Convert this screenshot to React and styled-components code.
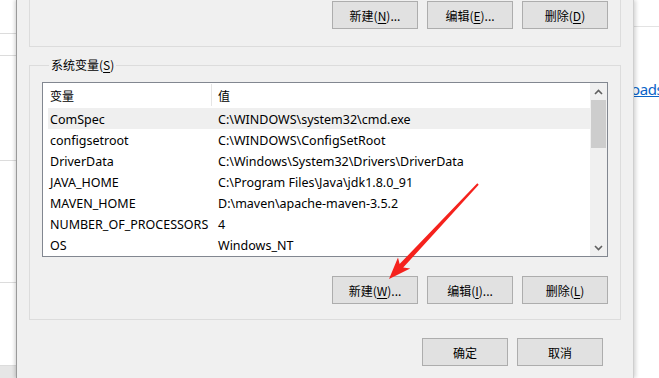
import styled, { createGlobalStyle } from "styled-components";

const GlobalStyle = createGlobalStyle`
  html, body {
    margin: 0;
    padding: 0;
    background: #ffffff;
    overflow: hidden;
  }
  body {
    font-family: "Noto Sans", "Noto Sans CJK SC", sans-serif;
    font-size: 12px;
    color: #000;
  }
`

const rows = [
    {name: 'ComSpec', value: 'C:\\WINDOWS\\system32\\cmd.exe', active: true},
    {name: 'configsetroot', value: 'C:\\WINDOWS\\ConfigSetRoot'},
    {name: 'DriverData', value: 'C:\\Windows\\System32\\Drivers\\DriverData'},
    {name: 'JAVA_HOME', value: 'C:\\Program Files\\Java\\jdk1.8.0_91'},
    {name: 'MAVEN_HOME', value: 'D:\\maven\\apache-maven-3.5.2'},
    {name: 'NUMBER_OF_PROCESSORS', value: '4'},
    {name: 'OS', value: 'Windows_NT'},
]

const sideLines = [33, 21, 104, 121, 82]

function App() {
    return (
        <>
            <GlobalStyle/>
            <Page>
                <LeftStrip>
                    {sideLines.map((h, i) => <SideRow key={i} $h={h}/>)}
                    <SideFooter/>
                </LeftStrip>

                <Dialog>
                    <TopGroup>
                        <ButtonRow $right={12}>
                            <Button>新建(<u>N</u>)...</Button>
                            <Button>编辑(<u>E</u>)...</Button>
                            <Button>删除(<u>D</u>)</Button>
                        </ButtonRow>
                    </TopGroup>

                    <SysGroup>
                        <Legend>系统变量(<u>S</u>)</Legend>
                        <ListBox>
                            <ListContent>
                                <HeaderRow>
                                    <NameCell>变量</NameCell>
                                    <Divider/>
                                    <ValueCell>值</ValueCell>
                                </HeaderRow>
                                {rows.map((r, i) => (
                                    <Row key={i} $active={r.active}>
                                        <NameCell>{r.name}</NameCell>
                                        <ValueCell $pad>{r.value}</ValueCell>
                                    </Row>
                                ))}
                            </ListContent>
                            <Scrollbar>
                                <ScrollArrow>
                                    <svg width="9" height="6" viewBox="0 0 9 6">
                                        <polyline points="1,5 4.5,1.5 8,5" fill="none" stroke="#606060" strokeWidth="1.6"/>
                                    </svg>
                                </ScrollArrow>
                                <Track>
                                    <Thumb/>
                                </Track>
                                <ScrollArrow>
                                    <svg width="9" height="6" viewBox="0 0 9 6">
                                        <polyline points="1,1 4.5,4.5 8,1" fill="none" stroke="#606060" strokeWidth="1.6"/>
                                    </svg>
                                </ScrollArrow>
                            </Scrollbar>
                        </ListBox>
                        <ButtonRow $top={18} $right={0}>
                            <Button>新建(<u>W</u>)...</Button>
                            <Button>编辑(<u>I</u>)...</Button>
                            <Button>删除(<u>L</u>)</Button>
                        </ButtonRow>
                    </SysGroup>

                    <FooterRow>
                        <Button>确定</Button>
                        <Button>取消</Button>
                    </FooterRow>
                </Dialog>

                <RightStrip>
                    <RightLine/>
                    <Link>oads</Link>
                </RightStrip>

                <Arrow width="659" height="378" viewBox="0 0 659 378">
                    <polygon
                        points="389,279 398,257.6 399.6,264 477.3,183.3 478.7,184.7 403.2,267.6 410.2,268.5"
                        fill="#f5221d"/>
                </Arrow>
            </Page>
        </>
    )
}

export default App;


const Page = styled.div`
  position: relative;
  display: flex;
  width: 659px;
  height: 378px;
  overflow: hidden;
`

const LeftStrip = styled.div`
  width: 16px;
  flex-shrink: 0;
  display: flex;
  flex-direction: column;
  background: #fff;
`

const SideRow = styled.div`
  height: ${p => p.$h}px;
  flex-shrink: 0;
  border-bottom: 1px solid #dcdcdc;
`

const SideFooter = styled.div`
  flex: 1;
  background: #e6e6e6;
`

const Dialog = styled.div`
  position: relative;
  z-index: 1;
  width: 592px;
  flex-shrink: 0;
  padding: 0 12px;
  background: #f0f0f0;
  border-left: 1px solid #9a9a9a;
  border-right: 1px solid #cfcfcf;
  box-shadow: -2px 0 3px rgba(0, 0, 0, 0.12), 2px 0 4px rgba(0, 0, 0, 0.16);
  display: flex;
  flex-direction: column;
`

const TopGroup = styled.div`
  height: 46px;
  border: 1px solid #dcdcdc;
  border-top: none;
`

const ButtonRow = styled.div`
  display: flex;
  justify-content: flex-end;
  gap: 9px;
  padding-right: ${p => p.$right}px;
  padding-top: 1px;
  margin-top: ${p => p.$top || 0}px;
`

const Button = styled.button`
  width: 86px;
  height: 28px;
  box-sizing: border-box;
  padding: 0;
  background: #e1e1e1;
  border: 1px solid #adadad;
  border-radius: 0;
  font-family: "Noto Sans CJK SC", "Noto Sans", sans-serif;
  font-size: 12px;
  color: #000;

  u {
    text-underline-offset: 2px;
  }
`

const SysGroup = styled.fieldset`
  margin: 10px 0 0;
  padding: 9px 12px 15px;
  border: 1px solid #dcdcdc;
  min-width: 0;
`

const Legend = styled.legend`
  margin-left: 7px;
  padding: 0 2px;
  font-family: "Noto Sans CJK SC", "Noto Sans", sans-serif;
  font-size: 12px;
  line-height: 16px;

  u {
    text-underline-offset: 2px;
  }
`

const ListBox = styled.div`
  height: 173px;
  border: 1px solid #828790;
  background: #fff;
  display: flex;
`

const ListContent = styled.div`
  flex: 1;
  display: flex;
  flex-direction: column;
  padding-left: 5px;
  font-size: 12.5px;
`

const HeaderRow = styled.div`
  height: 25px;
  flex-shrink: 0;
  display: flex;
  align-items: center;
  font-family: "Noto Sans CJK SC", "Noto Sans", sans-serif;
  font-size: 12px;
`

const Divider = styled.div`
  width: 1px;
  align-self: stretch;
  margin: 1px 0 2px;
  background: #e5e5e5;
`

const Row = styled.div`
  height: 21px;
  flex-shrink: 0;
  display: flex;
  align-items: center;
  padding-top: 1px;
  box-sizing: border-box;
  background: ${p => p.$active ? '#efefef' : 'transparent'};
`

const NameCell = styled.div`
  width: 161px;
  padding-left: 2px;
  white-space: nowrap;
  overflow: visible;
`

const ValueCell = styled.div`
  padding-left: ${p => p.$pad ? 7 : 6}px;
  white-space: nowrap;
`

const Scrollbar = styled.div`
  width: 17px;
  background: #f0f0f0;
  display: flex;
  flex-direction: column;
`

const ScrollArrow = styled.div`
  height: 17px;
  display: flex;
  align-items: center;
  justify-content: center;
`

const Track = styled.div`
  flex: 1;
  display: flex;
  justify-content: center;
`

const Thumb = styled.div`
  width: 15px;
  height: 48px;
  background: #cdcdcd;
`

const FooterRow = styled.div`
  display: flex;
  justify-content: flex-end;
  gap: 9px;
  margin-top: 18px;
  padding-right: 18px;
`

const RightStrip = styled.div`
  flex: 1;
  background: #fff;
  overflow: hidden;
  display: flex;
  flex-direction: column;
`

const RightLine = styled.div`
  height: 26px;
  flex-shrink: 0;
  border-bottom: 1px solid #e3e3e3;
`

const Link = styled.a`
  margin-top: 52px;
  margin-left: -3px;
  white-space: nowrap;
  font-family: "Noto Sans", sans-serif;
  font-size: 15px;
  line-height: 20px;
  letter-spacing: -0.4px;
  color: #0a64c8;
  text-decoration: underline;
`

const Arrow = styled.svg`
  position: absolute;
  left: 0;
  top: 0;
  z-index: 2;
  pointer-events: none;
`
